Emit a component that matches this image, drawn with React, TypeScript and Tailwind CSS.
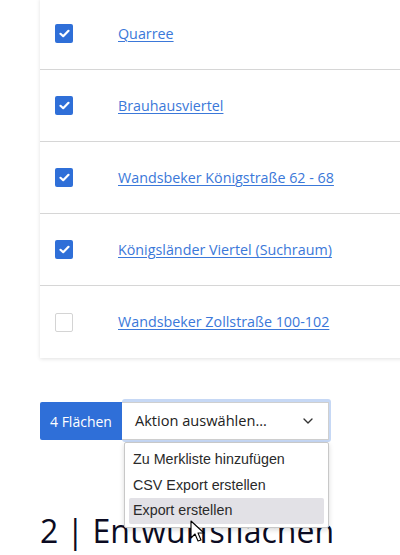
import { ChevronDown } from 'lucide-react';

const rows = [
  { name: 'Quarree', checked: true },
  { name: 'Brauhausviertel', checked: true },
  { name: 'Wandsbeker Königstraße 62 - 68', checked: true },
  { name: 'Königsländer Viertel (Suchraum)', checked: true },
  { name: 'Wandsbeker Zollstraße 100-102', checked: false },
];

function Checkbox({ checked }: { checked: boolean }) {
  if (!checked) {
    return <span className="block w-[18px] h-[19px] rounded-[2px] border border-[#d4d4d4] bg-white" />;
  }
  return (
    <span className="flex items-center justify-center w-[18px] h-[19px] rounded-[2px] bg-[#2f6fd8]">
      <svg width="11" height="9" viewBox="0 0 11 9">
        <path d="M1.5 4.8 L4.2 7.2 L9.5 1.8" fill="none" stroke="white" strokeWidth="2.2" strokeLinecap="round" strokeLinejoin="round" />
      </svg>
    </span>
  );
}

function Cursor() {
  return (
    <svg className="absolute left-[190px] top-[520px] z-30" width="16" height="24" viewBox="0 0 16 24">
      <path d="M1 1 L1 18 L5 14 L8 21 L11 20 L8 13 L14 13 Z" fill="white" stroke="black" strokeWidth="1.1" strokeLinejoin="round" />
    </svg>
  );
}

export default function App() {
  return (
    <div className="relative w-[400px] h-[555px] overflow-hidden bg-white font-['Open_Sans',sans-serif]">
      <div className="ml-[40px] w-[380px] -mt-[2px] bg-white shadow-[0_1px_4px_rgba(0,0,0,0.12)]">
        {rows.map((r, i) => (
          <div
            key={r.name}
            className={`flex items-center h-[72px] pl-[15px] ${i < rows.length - 1 ? 'border-b border-[#d6d6d6]' : ''}`}
          >
            <Checkbox checked={r.checked} />
            <a href="#" className="ml-[45px] text-[14.3px] text-[#3b78d9] underline underline-offset-2 decoration-1">
              {r.name}
            </a>
          </div>
        ))}
      </div>

      <div className="relative mt-[44px] ml-[40px] flex">
        <div className="flex items-center h-[38px] px-[10px] bg-[#2f6fd8] text-white text-[14px] rounded-l-[2px]">
          4 Flächen
        </div>
        <div className="relative -mt-[3px] -mr-[2px] p-[2px] pl-0 rounded-[3px] bg-[#c6d8f5]">
          <div className="flex items-center justify-between w-[207px] h-[38px] mt-[1px] pl-[13px] pr-[12px] bg-white border border-[#cfcfcf] border-l-0 text-[14.6px] text-[#222]">
            <span>Aktion auswählen...</span>
            <ChevronDown size={16} strokeWidth={2} className="text-[#333]" />
          </div>
        </div>

        <div className="absolute left-[84px] top-[40px] z-20 w-[205px] pt-[4px] pb-[3px] px-[4px] bg-white border border-[#c8c8c8] rounded-[2px] shadow-[0_2px_5px_rgba(0,0,0,0.15)] font-['Liberation_Sans',Arial,sans-serif] text-[14.3px] text-[#2a2a2a]">
          <div className="h-[25.5px] flex items-center pl-[4px]">Zu Merkliste hinzufügen</div>
          <div className="h-[25.5px] flex items-center pl-[4px]">CSV Export erstellen</div>
          <div className="h-[25.5px] flex items-center pl-[4px] bg-[#e2e1e6] rounded-[2px]">Export erstellen</div>
        </div>
      </div>

      <h2 className="mt-[70px] ml-[40px] text-[32px] leading-[1.2] text-[#0b0b22]">2 | Entwurfsflächen</h2>
      <Cursor />
    </div>
  );
}
